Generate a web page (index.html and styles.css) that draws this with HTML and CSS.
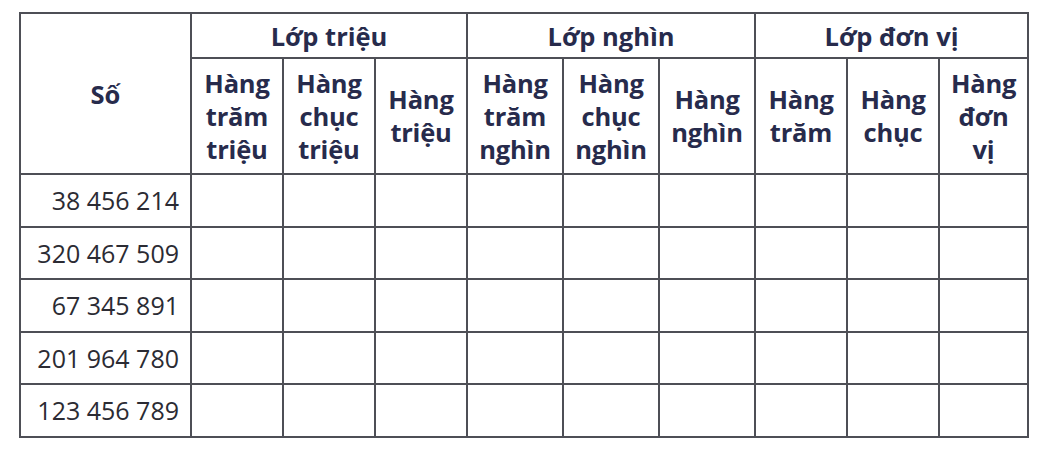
FILE: index.html
```html
<!DOCTYPE html>
<html lang="vi">
<head>
<meta charset="utf-8">
<title>Bảng lớp và hàng</title>
<link rel="stylesheet" href="styles.css">
</head>
<body>
<table class="place-table">
  <colgroup>
    <col class="c-num">
    <col class="c-a"><col class="c-a"><col class="c-a">
    <col class="c-b"><col class="c-b"><col class="c-b">
    <col class="c-a"><col class="c-a"><col class="c-c">
  </colgroup>
  <thead>
    <tr class="row-class">
      <th rowspan="2" class="so">Số</th>
      <th colspan="3">Lớp triệu</th>
      <th colspan="3">Lớp nghìn</th>
      <th colspan="3">Lớp đơn vị</th>
    </tr>
    <tr class="row-place">
      <th>Hàng<br>trăm<br>triệu</th>
      <th>Hàng<br>chục<br>triệu</th>
      <th>Hàng<br>triệu</th>
      <th>Hàng<br>trăm<br>nghìn</th>
      <th>Hàng<br>chục<br>nghìn</th>
      <th>Hàng<br>nghìn</th>
      <th>Hàng<br>trăm</th>
      <th>Hàng<br>chục</th>
      <th>Hàng<br>đơn<br>vị</th>
    </tr>
  </thead>
  <tbody>
    <tr><td class="num">38 456 214</td><td></td><td></td><td></td><td></td><td></td><td></td><td></td><td></td><td></td></tr>
    <tr><td class="num">320 467 509</td><td></td><td></td><td></td><td></td><td></td><td></td><td></td><td></td><td></td></tr>
    <tr><td class="num">67 345 891</td><td></td><td></td><td></td><td></td><td></td><td></td><td></td><td></td><td></td></tr>
    <tr><td class="num">201 964 780</td><td></td><td></td><td></td><td></td><td></td><td></td><td></td><td></td><td></td></tr>
    <tr><td class="num">123 456 789</td><td></td><td></td><td></td><td></td><td></td><td></td><td></td><td></td><td></td></tr>
  </tbody>
</table>
</body>
</html>
```
FILE: styles.css
```css
html, body {
  margin: 0;
  background: #ffffff;
}
body {
  padding: 12px 0 0 19px;
  font-family: "Open Sans", "Noto Sans", sans-serif;
}
.place-table {
  border-collapse: collapse;
  table-layout: fixed;
  width: 1007px;
}
.c-num { width: 171px; }
.c-a { width: 92px; }
.c-b { width: 96px; }
.c-c { width: 89px; }

.place-table th,
.place-table td {
  border: 2px solid #4e4f56;
  padding: 0;
}
.place-table th {
  color: #272b4c;
  font-weight: 700;
  font-size: 25.5px;
  text-align: center;
  vertical-align: middle;
}
.row-class { height: 45px; }
.row-class th { line-height: 30px; }
.row-place { height: 116px; }
.row-place th {
  line-height: 33px;
  letter-spacing: -0.2px;
}
.place-table tbody tr { height: 52.5px; }
.num {
  text-align: right;
  padding-right: 11px !important;
  font-size: 25px;
  color: #2b2b33;
  vertical-align: middle;
}
```
